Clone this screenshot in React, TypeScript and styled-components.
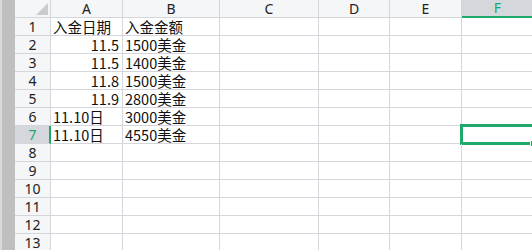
import React from "react";
import styled, { createGlobalStyle } from "styled-components";

const Global = createGlobalStyle`
  html, body { margin: 0; padding: 0; background: #ffffff; overflow: hidden; }
  body { width: 532px; height: 250px; }
`;

const GRID = "#d4d6dc";
const GREEN = "#21a86c";
const SEL_BG = "#d4d7dc";
const HEAD_BG = "#f5f6f7";

const Page = styled.div`
  display: flex;
  width: 532px;
  height: 250px;
  overflow: hidden;
`;

const Strip = styled.div`
  flex: 0 0 15px;
  background: #bfbfbf;
  border-left: 2px solid #d9d9d9;
  box-sizing: border-box;
`;

const Sheet = styled.div`
  display: grid;
  grid-template-columns: 36px 72px 97px 99px 71px 72px 72px 72px;
  grid-template-rows: repeat(14, 18px);
  flex: 0 0 auto;
`;

const Cell = styled.div<{ $align?: "left" | "right" }>`
  position: relative;
  box-sizing: border-box;
  border-right: 1px solid ${GRID};
  border-bottom: 1px solid ${GRID};
  display: flex;
  align-items: flex-end;
  justify-content: ${(p) => (p.$align === "right" ? "flex-end" : "flex-start")};
  padding: 0 3px 0 2px;
  font-family: "Noto Sans CJK SC", "Noto Sans", sans-serif;
  font-size: 14.5px;
  line-height: 17px;
  color: #111;
  white-space: nowrap;
  overflow: visible;
`;

const ColHead = styled.div<{ $sel?: boolean }>`
  box-sizing: border-box;
  background: ${(p) => (p.$sel ? SEL_BG : HEAD_BG)};
  border-right: 1px solid ${GRID};
  border-bottom: ${(p) => (p.$sel ? `2px solid ${GREEN}` : `1px solid ${GRID}`)};
  display: flex;
  align-items: center;
  justify-content: center;
  font-family: "Noto Sans", sans-serif;
  font-size: 14px;
  line-height: 16px;
  color: ${(p) => (p.$sel ? GREEN : "#222")};
`;

const RowHead = styled.div<{ $sel?: boolean }>`
  box-sizing: border-box;
  background: ${(p) => (p.$sel ? SEL_BG : HEAD_BG)};
  border-right: ${(p) => (p.$sel ? `2px solid ${GREEN}` : `1px solid ${GRID}`)};
  border-bottom: 1px solid ${GRID};
  display: flex;
  align-items: center;
  justify-content: center;
  padding-left: ${(p) => (p.$sel ? "1px" : "0")};
  font-family: "Noto Sans", sans-serif;
  font-size: 14px;
  line-height: 16px;
  color: ${(p) => (p.$sel ? GREEN : "#222")};
`;

const Corner = styled.div`
  box-sizing: border-box;
  background: ${HEAD_BG};
  border-right: 1px solid ${GRID};
  border-bottom: 1px solid ${GRID};
  display: flex;
  align-items: flex-end;
  justify-content: flex-end;
  padding: 0 2px 2px 0;
`;

const Selection = styled.div`
  position: absolute;
  top: -2px;
  left: -2px;
  right: -2px;
  bottom: -2px;
  border: 3px solid ${GREEN};
  pointer-events: none;
`;

const Handle = styled.div`
  position: absolute;
  right: -5px;
  bottom: -5px;
  width: 5px;
  height: 5px;
  background: ${GREEN};
  border: 1px solid #fff;
`;

const cols = ["A", "B", "C", "D", "E", "F"];

type Row = [string, "left" | "right", string];
const data: Row[] = [
  ["入金日期", "left", "入金金额"],
  ["11.5", "right", "1500美金"],
  ["11.5", "right", "1400美金"],
  ["11.8", "right", "1500美金"],
  ["11.9", "right", "2800美金"],
  ["11.10日", "left", "3000美金"],
  ["11.10日", "left", "4550美金"],
];

export default function App() {
  const rows = Array.from({ length: 13 }, (_, i) => i + 1);
  return (
    <Page>
      <Global />
      <Strip />
      <Sheet>
        <Corner>
          <svg width="12" height="12" viewBox="0 0 12 12">
            <polygon points="12,0 12,12 0,12" fill="#c9cbcf" />
          </svg>
        </Corner>
        {cols.map((c) => (
          <ColHead key={c} $sel={c === "F"}>
            {c}
          </ColHead>
        ))}
        <ColHead />
        {rows.map((r) => {
          const d = data[r - 1];
          return (
            <React.Fragment key={r}>
              <RowHead $sel={r === 7}>{r}</RowHead>
              <Cell $align={d ? d[1] : "left"}>{d ? d[0] : ""}</Cell>
              <Cell>{d ? d[2] : ""}</Cell>
              <Cell />
              <Cell />
              <Cell />
              <Cell>
                {r === 7 && (
                  <Selection>
                    <Handle />
                  </Selection>
                )}
              </Cell>
              <Cell />
            </React.Fragment>
          );
        })}
      </Sheet>
    </Page>
  );
}
